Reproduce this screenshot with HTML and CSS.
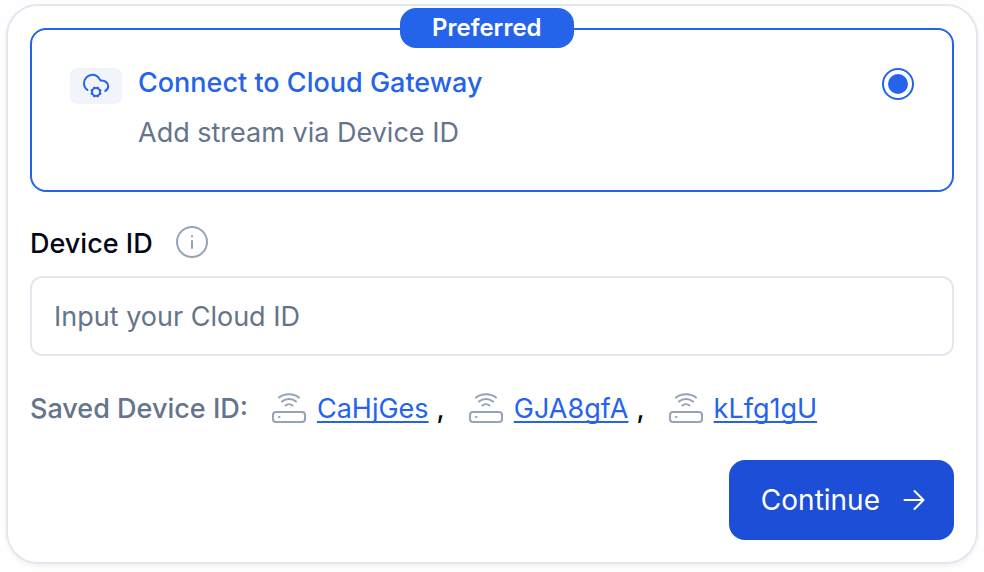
FILE: index.html
```
<!DOCTYPE html>
<html lang="en">
<head>
    <meta charset="UTF-8">
    <meta name="viewport" content="width=device-width, initial-scale=1.0">
    <title>Connect to Cloud Gateway</title>
    <link rel="stylesheet" href="styles.css">
</head>
<body>
    <!-- Shared device icon -->
    <svg class="sprite" aria-hidden="true">
        <symbol id="router" viewBox="0 0 34 32">
            <rect x="1" y="19" width="32" height="10" rx="3"/>
            <path d="M7 24h.5M7 4.500C12 0 22 0 27 4.500M10 8.500C14 5 20 5 24 8.500M13.500 12.500C15.500 10.700 18.500 10.700 20.500 12.500"/>
        </symbol>
    </svg>

    <form class="card">
        <label class="option">
            <span class="badge">Preferred</span>
            <span class="option-icon">
                <svg width="28" height="28" viewBox="0 0 28 28" aria-hidden="true">
                    <path d="M5.500 18C3 16.400 2 14 2 11.300A8.500 8.500 0 0 1 18.500 8.500C22.800 8 26.200 10.800 26.200 14.300C26.200 16.400 25.200 18 23.300 19"/>
                    <circle cx="14" cy="20" r="4"/>
                    <path class="teeth" d="M18 21.700l1.200.500M15.700 24l.5 1.200M12.300 24l-.5 1.200M10 21.700l-1.200.500M10 18.300l-1.200-.5M12.300 16l-.5-1.200M15.700 16l.5-1.200M18 18.300l1.200-.5"/>
                </svg>
            </span>
            <span class="option-text">
                <span class="option-title">Connect to Cloud Gateway</span>
                <span class="option-desc">Add stream via Device ID</span>
            </span>
            <input class="option-radio" type="radio" name="source" value="cloud" checked>
        </label>

        <div class="field-head">
            <label class="field-label" for="device-id">Device ID</label>
            <button class="info" type="button" aria-label="About Device ID">
                <svg width="32" height="32" viewBox="0 0 32 32" aria-hidden="true">
                    <circle cx="16" cy="16" r="15"/>
                    <path d="M16 15v7M16 10v.5"/>
                </svg>
            </button>
        </div>
        <input class="field" id="device-id" type="text" placeholder="Input your Cloud ID">

        <div class="saved">
            <span class="saved-label">Saved Device ID:</span>
            <span class="device"><svg class="router"><use href="#router"/></svg><a href="#">CaHjGes</a><span class="comma">,</span></span>
            <span class="device"><svg class="router"><use href="#router"/></svg><a href="#">GJA8gfA</a><span class="comma">,</span></span>
            <span class="device"><svg class="router"><use href="#router"/></svg><a href="#">kLfg1gU</a></span>
        </div>

        <button class="continue" type="submit">
            Continue
            <svg width="24" height="24" viewBox="0 0 24 24" aria-hidden="true">
                <path d="M2.500 12h19M12.500 3l9 9-9 9"/>
            </svg>
        </button>
    </form>
</body>
</html>
```

FILE: styles.css
```
* {
    box-sizing: border-box;
}

body {
    margin: 0;
    padding: 4px 6px 8px;
    background-color: #fefefe;
    font-family: Inter, "Liberation Sans", sans-serif;
    font-size: 27px;
    line-height: 40px;
    color: #020617;
}

.sprite {
    display: none;
}

svg {
    flex: none;
    fill: none;
    stroke: currentColor;
    stroke-width: 2;
    stroke-linecap: round;
    stroke-linejoin: round;
}

.card {
    display: flex;
    flex-direction: column;
    padding: 22px;
    border: 2px solid #e2e8f0;
    border-radius: 32px;
    background-color: white;
    box-shadow: 0 2px 4px rgba(0, 0, 0, 0.06);
}

/* Source option */
.option {
    position: relative;
    display: flex;
    align-items: flex-start;
    gap: 16px;
    padding: 33px 38px 37px;
    border: 2px solid #2563eb;
    border-radius: 16px;
    cursor: pointer;
}

.badge {
    position: absolute;
    top: -22px;
    left: 40%;
    padding: 0 32px;
    border-radius: 16px;
    background-color: #2563eb;
    color: white;
    font-size: 24px;
    font-weight: 600;
}

.option-icon {
    display: flex;
    justify-content: center;
    margin-top: 5px;
    padding: 4px 12px;
    border-radius: 8px;
    background-color: #f1f5fb;
    color: #2563eb;
}

.teeth {
    stroke-linecap: butt;
}

.option-text {
    display: flex;
    flex: 1;
    flex-direction: column;
    gap: 10px;
}

.option-title {
    color: #2563eb;
    font-weight: 500;
}

.option-desc {
    color: #64748b;
}

.option-radio {
    appearance: none;
    width: 32px;
    height: 32px;
    margin: 5px 0 0;
    padding: 4px;
    border: 2px solid #2563eb;
    border-radius: 50%;
}

.option-radio:checked {
    background: #2563eb content-box;
}

/* Device ID field */
.field-head {
    display: flex;
    align-items: flex-start;
    gap: 23px;
    margin-top: 32px;
}

.field-label {
    font-weight: 500;
}

.info {
    display: flex;
    padding: 2px 0 0;
    border: none;
    background: none;
    color: #94a3b8;
    cursor: pointer;
}

.field {
    width: 100%;
    height: 80px;
    margin-top: 12px;
    padding: 0 22px;
    border: 2px solid #e2e8f0;
    border-radius: 12px;
    background-color: white;
    font: inherit;
}

.field::placeholder {
    color: #64748b;
    opacity: 1;
}

/* Saved devices */
.saved {
    display: flex;
    flex-wrap: wrap;
    gap: 24px;
    margin-top: 33px;
}

.saved-label {
    color: #64748b;
    font-weight: 500;
}

.device {
    display: flex;
    align-items: center;
}

.router {
    width: 34px;
    height: 32px;
    margin-right: 11px;
    color: #94a3b8;
}

.device a {
    color: #2563eb;
    text-decoration: underline;
    text-decoration-thickness: 2px;
    text-decoration-skip-ink: none;
    text-underline-offset: 3px;
}

.comma {
    margin-left: 8px;
    font-weight: 500;
}

.continue {
    display: flex;
    align-items: center;
    align-self: flex-end;
    gap: 22px;
    margin-top: 31px;
    padding: 20px 28px 20px 32px;
    border: none;
    border-radius: 16px;
    background-color: #1d4ed8;
    color: white;
    font: inherit;
    font-size: 28px;
    cursor: pointer;
}

.continue:hover {
    background-color: #1e40af;
}
```
